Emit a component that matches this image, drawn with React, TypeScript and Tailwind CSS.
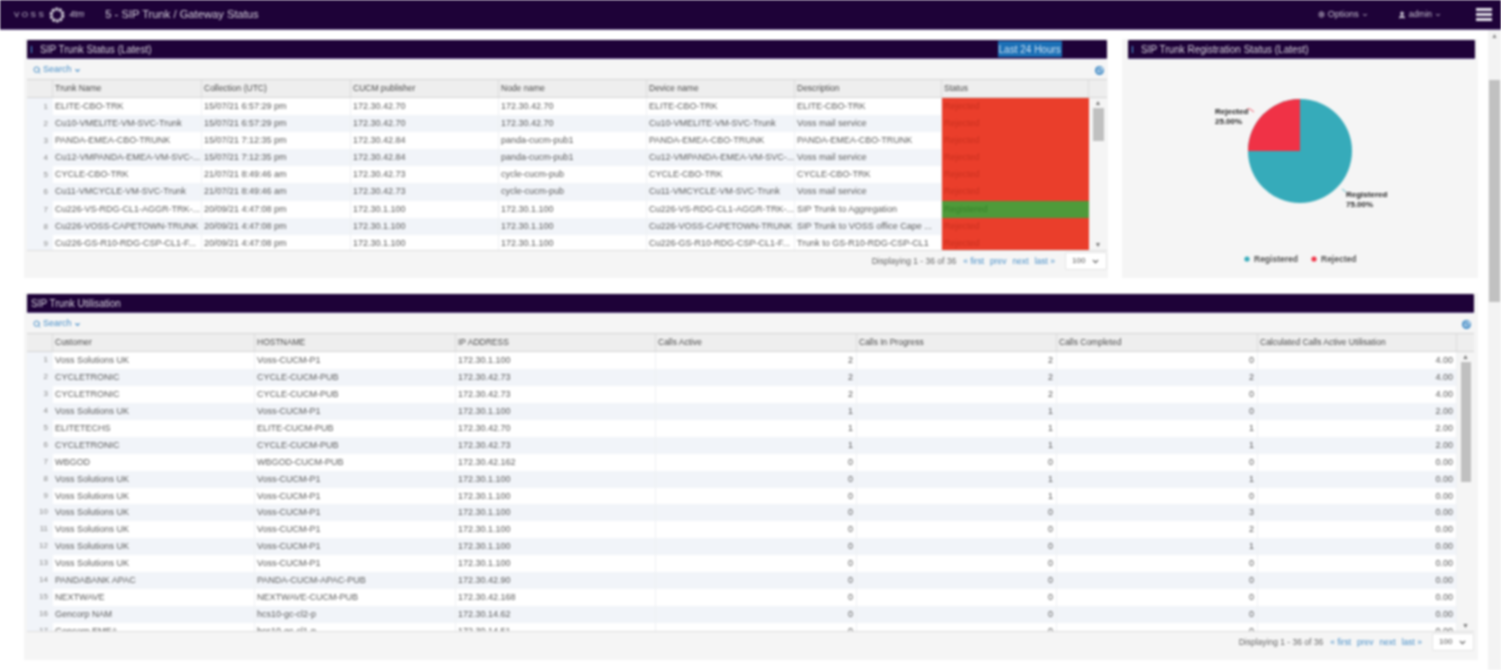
import { Search, ChevronDown, RefreshCw, User, Settings } from "lucide-react";

const statusRows = [
  ["ELITE-CBO-TRK", "15/07/21 6:57:29 pm", "172.30.42.70", "172.30.42.70", "ELITE-CBO-TRK", "ELITE-CBO-TRK", "Rejected"],
  ["Cu10-VMELITE-VM-SVC-Trunk", "15/07/21 6:57:29 pm", "172.30.42.70", "172.30.42.70", "Cu10-VMELITE-VM-SVC-Trunk", "Voss mail service", "Rejected"],
  ["PANDA-EMEA-CBO-TRUNK", "15/07/21 7:12:35 pm", "172.30.42.84", "panda-cucm-pub1", "PANDA-EMEA-CBO-TRUNK", "PANDA-EMEA-CBO-TRUNK", "Rejected"],
  ["Cu12-VMPANDA-EMEA-VM-SVC-...", "15/07/21 7:12:35 pm", "172.30.42.84", "panda-cucm-pub1", "Cu12-VMPANDA-EMEA-VM-SVC-...", "Voss mail service", "Rejected"],
  ["CYCLE-CBO-TRK", "21/07/21 8:49:46 am", "172.30.42.73", "cycle-cucm-pub", "CYCLE-CBO-TRK", "CYCLE-CBO-TRK", "Rejected"],
  ["Cu11-VMCYCLE-VM-SVC-Trunk", "21/07/21 8:49:46 am", "172.30.42.73", "cycle-cucm-pub", "Cu11-VMCYCLE-VM-SVC-Trunk", "Voss mail service", "Rejected"],
  ["Cu226-VS-RDG-CL1-AGGR-TRK-...", "20/09/21 4:47:08 pm", "172.30.1.100", "172.30.1.100", "Cu226-VS-RDG-CL1-AGGR-TRK-...", "SIP Trunk to Aggregation", "Registered"],
  ["Cu226-VOSS-CAPETOWN-TRUNK", "20/09/21 4:47:08 pm", "172.30.1.100", "172.30.1.100", "Cu226-VOSS-CAPETOWN-TRUNK", "SIP Trunk to VOSS office Cape ...", "Rejected"],
  ["Cu226-GS-R10-RDG-CSP-CL1-F...", "20/09/21 4:47:08 pm", "172.30.1.100", "172.30.1.100", "Cu226-GS-R10-RDG-CSP-CL1-F...", "Trunk to GS-R10-RDG-CSP-CL1", "Rejected"],
];

const statusHeaders = ["Trunk Name", "Collection (UTC)", "CUCM publisher", "Node name", "Device name", "Description", "Status"];

const utilHeaders = ["Customer", "HOSTNAME", "IP ADDRESS", "Calls Active", "Calls In Progress", "Calls Completed", "Calculated Calls Active Utilisation"];

const utilRows = [
  ["Voss Solutions UK", "Voss-CUCM-P1", "172.30.1.100", "2", "2", "0", "4.00"],
  ["CYCLETRONIC", "CYCLE-CUCM-PUB", "172.30.42.73", "2", "2", "2", "4.00"],
  ["CYCLETRONIC", "CYCLE-CUCM-PUB", "172.30.42.73", "2", "2", "0", "4.00"],
  ["Voss Solutions UK", "Voss-CUCM-P1", "172.30.1.100", "1", "1", "0", "2.00"],
  ["ELITETECHS", "ELITE-CUCM-PUB", "172.30.42.70", "1", "1", "1", "2.00"],
  ["CYCLETRONIC", "CYCLE-CUCM-PUB", "172.30.42.73", "1", "1", "1", "2.00"],
  ["WBGOD", "WBGOD-CUCM-PUB", "172.30.42.162", "0", "0", "0", "0.00"],
  ["Voss Solutions UK", "Voss-CUCM-P1", "172.30.1.100", "0", "1", "1", "0.00"],
  ["Voss Solutions UK", "Voss-CUCM-P1", "172.30.1.100", "0", "1", "0", "0.00"],
  ["Voss Solutions UK", "Voss-CUCM-P1", "172.30.1.100", "0", "0", "3", "0.00"],
  ["Voss Solutions UK", "Voss-CUCM-P1", "172.30.1.100", "0", "0", "2", "0.00"],
  ["Voss Solutions UK", "Voss-CUCM-P1", "172.30.1.100", "0", "0", "1", "0.00"],
  ["Voss Solutions UK", "Voss-CUCM-P1", "172.30.1.100", "0", "0", "0", "0.00"],
  ["PANDABANK APAC", "PANDA-CUCM-APAC-PUB", "172.30.42.90", "0", "0", "0", "0.00"],
  ["NEXTWAVE", "NEXTWAVE-CUCM-PUB", "172.30.42.168", "0", "0", "0", "0.00"],
  ["Gencorp NAM", "hcs10-gc-cl2-p", "172.30.14.62", "0", "0", "0", "0.00"],
  ["Gencorp EMEA", "hcs10-gc-cl1-p", "172.30.14.51", "0", "0", "0", "0.00"],
];

const statusCols = "grid grid-cols-[26px_149px_149px_148px_148px_148px_147px_147px]";
const utilCols = "grid grid-cols-[26px_202px_201px_200px_201px_200px_201px_199px]";

function TitleBar({ title, arrow, children }: { title: string; arrow?: boolean; children?: React.ReactNode }) {
  return (
    <div className="flex h-[19px] shrink-0 items-center rounded-[1px] border-b border-[#5d4a86] bg-[#1e0238] pl-[4px] text-[10px] text-[#d8d4de]">
      {arrow && <span className="mr-[8px] h-[7px] w-[1px] bg-[#4a9fe0]" />}
      <span>{title}</span>
      {children}
    </div>
  );
}

function Toolbar() {
  return (
    <div className="flex h-[20px] shrink-0 items-center justify-between pl-[6px] pr-[3px] pt-[2px] text-[9px] text-[#4a90c8]">
      <span className="flex items-center gap-[2px]">
        <Search size={8} strokeWidth={3} />
        Search
        <ChevronDown size={7} strokeWidth={4} />
      </span>
      <span className="flex h-[9px] w-[9px] items-center justify-center rounded-full bg-[#4a90c8] text-white">
        <RefreshCw size={6} strokeWidth={3} />
      </span>
    </div>
  );
}

function HeaderRow({ cols, labels }: { cols: string; labels: string[] }) {
  return (
    <div className="flex h-[19px] shrink-0 border-y border-[#d4d4d4] bg-[#eeeeee] text-[8.5px] text-[#4a4a4a]">
      <div className={cols}>
        <div className="border-r border-[#dcdcdc]" />
        {labels.map((label) => (
          <div key={label} className="truncate border-r border-[#dcdcdc] pl-[2px] leading-[16px]">
            {label}
          </div>
        ))}
      </div>
      <div className="flex-1" />
    </div>
  );
}

function GridScroll({ thumbClass }: { thumbClass: string }) {
  return (
    <div className="flex flex-1 flex-col items-center bg-[#f5f5f5] text-[7px] leading-[10px] text-[#777777]">
      <span className="h-[10px]">▲</span>
      <div className={thumbClass} />
      <span className="mt-auto h-[10px]">▼</span>
    </div>
  );
}

function Pager({ total }: { total: number }) {
  return (
    <div className="flex flex-1 items-start justify-end pt-[1px] text-[8.5px] text-[#666666]">
      <span className="mt-[3px]">Displaying 1 - {total} of {total}</span>
      <span className="ml-[7px] mt-[3px] flex gap-[6px] text-[#4a90c8]">
        <span>« first</span>
        <span>prev</span>
        <span>next</span>
        <span>last »</span>
      </span>
      <div className="ml-[10px] flex h-[18px] w-[42px] items-center justify-between rounded-[2px] border border-[#e4e4e4] bg-white px-[6px] text-[8px] text-[#555555]">
        100
        <ChevronDown size={9} strokeWidth={3} />
      </div>
    </div>
  );
}

function StatusCell({ value }: { value: string }) {
  const rejected = value === "Rejected";
  return (
    <div className={rejected ? "bg-[#ea3e2b] pl-[2px] text-[#c9301f]" : "bg-[#4f9a3a] pl-[2px] text-[#37802a]"}>
      {value}
    </div>
  );
}

function TrunkStatusPanel() {
  return (
    <section className="flex h-[239px] w-[1084px] flex-col bg-[#f5f5f5] pb-0 pl-[3px] pr-[1px] pt-[1px]">
      <TitleBar title="SIP Trunk Status (Latest)" arrow>
        <span className="ml-[846px] flex h-[16px] items-center bg-[#1b6fb5] px-[1px] text-[#cfe2f3]">Last 24 Hours</span>
      </TitleBar>
      <Toolbar />
      <HeaderRow cols={statusCols} labels={statusHeaders} />
      <div className="flex h-[153px] shrink-0 overflow-hidden border-b border-[#dddddd] bg-white text-[9px] leading-[17.1px] text-[#5c5c5c]">
        <div>
          {statusRows.map((row, i) => (
            <div key={i} className={`${statusCols} h-[17.1px] ${i % 2 ? "bg-[#f1f4f9]" : "bg-white"}`}>
              <div className="bg-[#f1f4f9] pr-[5px] text-right text-[8px] text-[#888888]">{i + 1}</div>
              {row.slice(0, 6).map((cell, j) => (
                <div key={j} className="whitespace-nowrap border-r border-[#eef0f3] pl-[2px]">{cell}</div>
              ))}
              <StatusCell value={row[6]} />
            </div>
          ))}
        </div>
        <GridScroll thumbClass="h-[33px] w-[11px] bg-[#c0c0c0]" />
      </div>
      <Pager total={36} />
    </section>
  );
}

function PieChart() {
  return (
    <svg viewBox="0 0 347 219" className="h-[219px] w-[347px] font-['Liberation_Sans',sans-serif]">
      <circle cx="172" cy="92" r="52" fill="#36abba" />
      <path d="M172 92 L172 40 A52 52 0 0 0 120 92 Z" fill="#f03246" />
      <path d="M119 50 L122 50 L126 53" fill="none" stroke="#f03246" strokeWidth="0.8" />
      <path d="M214 130 L218 133" fill="none" stroke="#36abba" strokeWidth="0.8" />
      <g fontSize="8" fontWeight="700" fill="#222222">
        <text x="87" y="55">Rejected</text>
        <text x="87" y="65">25.00%</text>
        <text x="218" y="138">Registered</text>
        <text x="218" y="148">75.00%</text>
      </g>
      <circle cx="119" cy="200" r="2.6" fill="#36abba" />
      <circle cx="186" cy="200" r="2.6" fill="#f03246" />
      <g fontSize="8.5" fontWeight="700" fill="#555555">
        <text x="126" y="203">Registered</text>
        <text x="193" y="203">Rejected</text>
      </g>
    </svg>
  );
}

function RegistrationPanel() {
  return (
    <section className="flex h-[239px] w-[356px] flex-col bg-[#f5f5f5] pl-[6px] pr-[3px] pt-[1px]">
      <TitleBar title="SIP Trunk Registration Status (Latest)" arrow />
      <PieChart />
    </section>
  );
}

function UtilisationPanel() {
  return (
    <section className="ml-[24px] mt-[15px] flex h-[367px] w-[1454px] flex-col bg-[#f5f5f5] pl-[3px] pr-[4px] pt-[1px]">
      <TitleBar title="SIP Trunk Utilisation" />
      <Toolbar />
      <HeaderRow cols={utilCols} labels={utilHeaders} />
      <div className="flex h-[280px] shrink-0 overflow-hidden border-b border-[#dddddd] bg-white text-[9px] leading-[16.95px] text-[#5c5c5c]">
        <div>
          {utilRows.map((row, i) => (
            <div key={i} className={`${utilCols} h-[16.95px] ${i % 2 ? "bg-[#f1f4f9]" : "bg-white"}`}>
              <div className="bg-[#f1f4f9] pr-[5px] text-right text-[8px] text-[#888888]">{i + 1}</div>
              {row.map((cell, j) => (
                <div key={j} className={`whitespace-nowrap border-r border-[#eef0f3] ${j > 2 ? "pr-[3px] text-right" : "pl-[2px]"}`}>
                  {cell}
                </div>
              ))}
            </div>
          ))}
        </div>
        <GridScroll thumbClass="h-[120px] w-[10px] bg-[#c0c0c0]" />
      </div>
      <Pager total={36} />
    </section>
  );
}

function TopBar() {
  return (
    <header className="flex h-[30px] items-center border-b border-[#6b5a8a] bg-[#1e0238] pl-[14px] pr-[9px] text-[#c9c4d2]">
      <span className="text-[8px] tracking-[2.5px]">VOSS</span>
      <svg viewBox="0 0 20 20" className="ml-[2px] h-[18px] w-[18px]">
        <circle cx="10" cy="10" r="6.5" fill="none" stroke="#d8d4de" strokeWidth="3.4" strokeDasharray="3 1" />
      </svg>
      <span className="ml-[3px] text-[9px] italic">4tm</span>
      <span className="ml-[21px] text-[11.2px] text-[#d8d4de]">5 - SIP Trunk / Gateway Status</span>
      <span className="ml-auto flex items-center gap-[3px] text-[9px]">
        <Settings size={7} strokeWidth={3} />
        Options
        <ChevronDown size={6} strokeWidth={4} />
      </span>
      <span className="ml-[30px] flex items-center gap-[3px] text-[8.5px]">
        <User size={8} strokeWidth={3} fill="currentColor" />
        admin
        <ChevronDown size={6} strokeWidth={4} />
      </span>
      <div className="ml-[35px] flex w-[16px] flex-col gap-[2px]">
        <span className="h-[3px] bg-[#e4e1ea]" />
        <span className="h-[3px] bg-[#e4e1ea]" />
        <span className="h-[3px] bg-[#e4e1ea]" />
      </div>
    </header>
  );
}

export default function App() {
  return (
    <div className="flex h-[670px] w-[1501px] flex-col overflow-hidden bg-white font-['Liberation_Sans',sans-serif] blur-[0.8px]">
      <TopBar />
      <div className="flex flex-1">
        <main className="flex-1 pt-[9px]">
          <div className="ml-[24px] flex gap-[14px]">
            <TrunkStatusPanel />
            <RegistrationPanel />
          </div>
          <UtilisationPanel />
        </main>
        <div className="flex w-[13px] flex-col items-center bg-[#f3f3f3] text-[7px] leading-[12px] text-[#888888]">
          <span className="h-[50px]">▲</span>
          <div className="h-[222px] w-[11px] bg-[#c1c1c1]" />
        </div>
      </div>
    </div>
  );
}
